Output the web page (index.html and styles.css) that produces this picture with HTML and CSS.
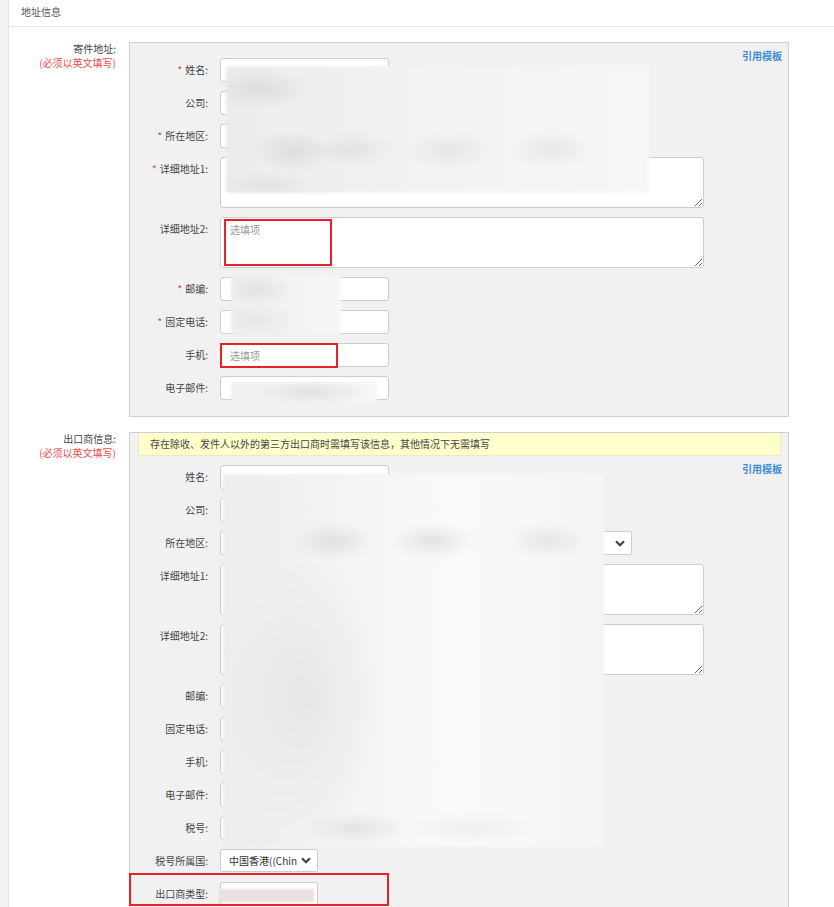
FILE: index.html
```html
<!DOCTYPE html>
<html lang="zh-CN">
<head>
<meta charset="utf-8">
<title>地址信息</title>
<link rel="stylesheet" href="styles.css">
</head>
<body>
<div class="panel">
  <div class="panel-head">地址信息</div>
  <div class="panel-body">

    <div class="section">
      <div class="sec-label"><div>寄件地址:</div><div class="red">(必须以英文填写)</div></div>
      <div class="box">
        <div class="rows rows-first">
          <a class="tpl">引用模板</a>
          <div class="row"><label><i>*</i>姓名:</label><input class="inp" type="text"></div>
          <div class="row"><label>公司:</label><input class="inp" type="text"></div>
          <div class="row"><label><i>*</i>所在地区:</label>
            <div class="selgroup">
              <div class="sel sel-area"><span></span><svg viewBox="0 0 10 7" class="chev"><path d="M1 1.2L5 5.2L9 1.2"/></svg></div>
              <div class="sel sel-area"><span></span><svg viewBox="0 0 10 7" class="chev"><path d="M1 1.2L5 5.2L9 1.2"/></svg></div>
              <div class="sel sel-area"><span></span><svg viewBox="0 0 10 7" class="chev"><path d="M1 1.2L5 5.2L9 1.2"/></svg></div>
            </div>
          </div>
          <div class="row"><label><i>*</i>详细地址1:</label><textarea class="ta"></textarea></div>
          <div class="row"><label>详细地址2:</label><textarea class="ta" placeholder="选填项"></textarea></div>
          <div class="row"><label><i>*</i>邮编:</label><input class="inp" type="text"></div>
          <div class="row"><label><i>*</i>固定电话:</label><input class="inp" type="text"></div>
          <div class="row"><label>手机:</label><input class="inp" type="text" placeholder="选填项"></div>
          <div class="row"><label>电子邮件:</label><input class="inp" type="text"></div>
        </div>
        <div class="blur b1a"></div>
        <div class="blur b1b"></div>
        <div class="blur b1c"></div>
        <div class="mark m1"></div>
        <div class="mark m2"></div>
      </div>
    </div>

    <div class="section">
      <div class="sec-label"><div>出口商信息:</div><div class="red">(必须以英文填写)</div></div>
      <div class="box box-open">
        <div class="notice">存在除收、发件人以外的第三方出口商时需填写该信息，其他情况下无需填写</div>
        <div class="rows rows-second">
          <a class="tpl">引用模板</a>
          <div class="row"><label>姓名:</label><input class="inp inp-dots" type="text" value="· · · · · ·"></div>
          <div class="row"><label>公司:</label><input class="inp" type="text"></div>
          <div class="row"><label>所在地区:</label>
            <div class="selgroup">
              <div class="sel sel-area"><span></span><svg viewBox="0 0 10 7" class="chev"><path d="M1 1.2L5 5.2L9 1.2"/></svg></div>
              <div class="sel sel-area"><span></span><svg viewBox="0 0 10 7" class="chev"><path d="M1 1.2L5 5.2L9 1.2"/></svg></div>
              <div class="sel sel-area"><span></span><svg viewBox="0 0 10 7" class="chev"><path d="M1 1.2L5 5.2L9 1.2"/></svg></div>
            </div>
          </div>
          <div class="row"><label>详细地址1:</label><textarea class="ta"></textarea></div>
          <div class="row"><label>详细地址2:</label><textarea class="ta"></textarea></div>
          <div class="row"><label>邮编:</label><input class="inp" type="text"></div>
          <div class="row"><label>固定电话:</label><input class="inp" type="text"></div>
          <div class="row"><label>手机:</label><input class="inp" type="text"></div>
          <div class="row"><label>电子邮件:</label><input class="inp" type="text"></div>
          <div class="row"><label>税号:</label><input class="inp" type="text"></div>
          <div class="row"><label>税号所属国:</label>
            <div class="sel sel-small"><span>中国香港((Chin</span><svg viewBox="0 0 10 7" class="chev"><path d="M1 1.2L5 5.2L9 1.2"/></svg></div>
          </div>
          <div class="row"><label>出口商类型:</label>
            <div class="sel sel-small"><span></span><svg viewBox="0 0 10 7" class="chev"><path d="M1 1.2L5 5.2L9 1.2"/></svg></div>
          </div>
        </div>
        <div class="blur b2a"></div>
        <div class="blur b2b"></div>
        <div class="mark m3"></div>
      </div>
    </div>

  </div>
</div>
</body>
</html>
```

FILE: styles.css
```css
html, body {
  margin: 0;
  padding: 0;
}
body {
  background: #f3f3f3;
  font-family: "Noto Sans CJK SC", "Microsoft YaHei", sans-serif;
  font-size: 10px;
  color: #333;
  overflow: hidden;
}
.panel {
  margin-left: 8px;
  background: #fff;
  border-left: 1px solid #e6e6e6;
  min-height: 100vh;
}
.panel-head {
  height: 26px;
  line-height: 24px;
  padding-left: 12px;
  border-bottom: 1px solid #e6e6e6;
  color: #555;
  font-size: 10px;
}
.panel-body {
  padding-top: 15px;
}
.section {
  display: flex;
  margin-bottom: 15px;
}
.sec-label {
  width: 107px;
  padding-right: 13px;
  text-align: right;
  line-height: 14px;
  color: #444;
}
.red {
  color: #f04a4a;
}
.box {
  position: relative;
  width: 658px;
  background: #f1f1f1;
  border: 1px solid #cfcfcf;
}
.box-open {
  border-bottom: none;
  min-height: 480px;
}
.rows {
  position: relative;
  display: flex;
  flex-direction: column;
  gap: 9px;
}
.rows-first {
  padding: 15px 0 16px;
}
.rows-second {
  padding: 9px 0 15px;
}
.tpl {
  position: absolute;
  top: 6px;
  right: 6px;
  line-height: 14px;
  color: #3b8ddb;
  font-weight: bold;
  font-size: 10px;
  cursor: pointer;
}
.row {
  display: flex;
  align-items: flex-start;
  gap: 12px;
}
.row label {
  width: 78px;
  text-align: right;
  line-height: 24px;
  color: #444;
  white-space: nowrap;
}
.row label i {
  font-style: normal;
  color: #e8383d;
  margin-right: 3px;
}
.inp {
  box-sizing: border-box;
  width: 169px;
  height: 24px;
  margin: 0;
  padding: 0 9px;
  border: 1px solid #cdcdcd;
  border-radius: 3px;
  background: #fff;
  font-family: inherit;
  font-size: 10px;
  color: #333;
  outline: none;
}
.inp-dots {
  color: #888;
  letter-spacing: 1px;
}
.inp::placeholder, .ta::placeholder {
  color: #999;
}
.ta {
  box-sizing: border-box;
  display: block;
  width: 484px;
  height: 51px;
  margin: 0;
  padding: 4px 9px;
  border: 1px solid #cdcdcd;
  border-radius: 3px;
  background: #fff;
  font-family: inherit;
  font-size: 10px;
  color: #333;
  outline: none;
}
.selgroup {
  display: flex;
  gap: 5px;
}
.sel {
  box-sizing: border-box;
  display: flex;
  align-items: center;
  height: 24px;
  border: 1px solid #cdcdcd;
  border-radius: 2px;
  background: #fff;
  padding: 0 6px 0 8px;
  gap: 3px;
}
.sel span {
  flex: 1;
  white-space: nowrap;
  color: #333;
  line-height: 22px;
}
.sel-area {
  width: 134px;
}
.sel-small {
  width: 98px;
  height: 23px;
}
.chev {
  flex: none;
  width: 10px;
  height: 7px;
}
.chev path {
  fill: none;
  stroke: #444;
  stroke-width: 2.2;
}
.notice {
  margin: 0 7px 0 8px;
  height: 22px;
  line-height: 22px;
  padding-left: 11px;
  background: #ffffcc;
  border: 1px solid #ece9c4;
  border-top: none;
  color: #444;
}
.blur {
  position: absolute;
  filter: blur(1.5px);
}
.b1a {
  left: 96px;
  top: 23px;
  width: 423px;
  height: 127px;
  background:
    radial-gradient(ellipse 50px 18px at 8% 18%, rgba(205,205,205,.5), transparent),
    radial-gradient(ellipse 40px 20px at 16% 67%, rgba(200,200,200,.45), transparent),
    radial-gradient(ellipse 40px 18px at 30% 66%, rgba(210,210,210,.45), transparent),
    radial-gradient(ellipse 40px 18px at 53% 66%, rgba(210,210,210,.4), transparent),
    radial-gradient(ellipse 40px 18px at 77% 66%, rgba(210,210,210,.4), transparent),
    radial-gradient(ellipse 50px 14px at 10% 95%, rgba(215,215,215,.45), transparent),
    linear-gradient(90deg, #ebebeb 0%, #f1f1f1 40%, #f6f6f6 100%);
}
.b1b {
  left: 101px;
  top: 232px;
  width: 110px;
  height: 60px;
  background:
    radial-gradient(ellipse 35px 16px at 25% 25%, rgba(210,210,210,.45), transparent),
    radial-gradient(ellipse 35px 16px at 25% 75%, rgba(215,215,215,.4), transparent),
    linear-gradient(90deg, #eeeeee, #f6f6f6);
}
.b1c {
  left: 101px;
  top: 339px;
  width: 146px;
  height: 20px;
  background:
    radial-gradient(ellipse 60px 12px at 55% 50%, rgba(205,205,205,.5), transparent),
    linear-gradient(90deg, #f0f0f0, #f6f6f6);
}
.b2a {
  left: 93px;
  top: 41px;
  width: 381px;
  height: 373px;
  background:
    radial-gradient(ellipse 40px 18px at 29% 18%, rgba(205,205,205,.5), transparent),
    radial-gradient(ellipse 40px 18px at 55% 18%, rgba(205,205,205,.5), transparent),
    radial-gradient(ellipse 40px 18px at 85% 18%, rgba(210,210,210,.45), transparent),
    radial-gradient(ellipse 50px 16px at 35% 95%, rgba(210,210,210,.5), transparent),
    radial-gradient(ellipse 60px 16px at 65% 95%, rgba(225,225,225,.45), transparent),
    radial-gradient(ellipse 80px 140px at 22% 60%, rgba(222,222,222,.55), transparent),
    linear-gradient(90deg, #ececec 0%, #f3f3f3 30%, #f9f9f9 60%, #f4f4f4 100%);
}
.b2b {
  left: 89px;
  top: 456px;
  width: 95px;
  height: 13px;
  background: #ecdfdf;
  filter: blur(0.8px);
}
.mark {
  position: absolute;
  box-sizing: border-box;
  border: 2px solid #e8202a;
}
.m1 {
  left: 94px;
  top: 176px;
  width: 108px;
  height: 47px;
}
.m2 {
  left: 90px;
  top: 300px;
  width: 118px;
  height: 25px;
}
.m3 {
  left: -1px;
  top: 440px;
  width: 260px;
  height: 33px;
}
```
